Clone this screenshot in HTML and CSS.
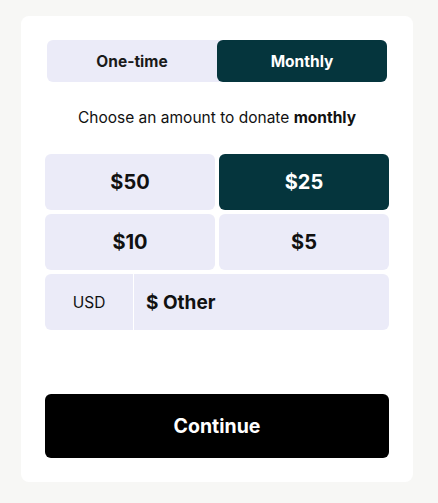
FILE: index.html
```html
<!DOCTYPE html>
<html>
<head>
<meta charset="utf-8">
<link rel="stylesheet" href="styles.css">
</head>
<body>
<div class="card">
  <div class="toggle">
    <button class="tab">One-time</button>
    <button class="tab active">Monthly</button>
  </div>
  <p class="prompt">Choose an amount to donate <b>monthly</b></p>
  <div class="amounts">
    <button class="amt">$50</button>
    <button class="amt selected">$25</button>
    <button class="amt">$10</button>
    <button class="amt">$5</button>
    <div class="other">
      <span class="currency">USD</span>
      <span class="other-input">$ Other</span>
    </div>
  </div>
  <button class="continue">Continue</button>
</div>
</body>
</html>
```
FILE: styles.css
```css
* { box-sizing: border-box; }
html, body { margin: 0; padding: 0; }
body {
  background: #f7f7f5;
  font-family: Inter, "Noto Sans", sans-serif;
  color: #111;
  padding: 16px 25px 21px 21px;
}
.card {
  background: #fff;
  border-radius: 8px;
  padding: 24px;
  width: 392px;
  height: 466px;
  display: flex;
  flex-direction: column;
}
.toggle {
  display: grid;
  grid-template-columns: 1fr 1fr;
  margin: 0 2px;
  height: 42px;
  background: #ebebf8;
  border-radius: 6px;
}
.tab {
  border: 0;
  background: transparent;
  font-family: inherit;
  font-size: 15.5px;
  font-weight: 700;
  color: #1a1a1a;
  border-radius: 6px;
  padding: 0;
}
.tab.active {
  background: #05353d;
  color: #fff;
}
.prompt {
  margin: 0;
  padding-top: 27px;
  height: 72px;
  text-align: center;
  font-size: 15.5px;
  line-height: 18px;
  color: #111;
}
.prompt b { font-weight: 700; }
.amounts {
  display: grid;
  grid-template-columns: 1fr 1fr;
  grid-auto-rows: 56px;
  gap: 4px;
}
.amt {
  border: 0;
  background: #ebebf8;
  border-radius: 6px;
  font-family: inherit;
  font-size: 20px;
  font-weight: 700;
  color: #111;
  padding: 0;
}
.amt.selected {
  background: #05353d;
  color: #fff;
}
.other {
  grid-column: 1 / 3;
  display: flex;
  background: #ebebf8;
  border-radius: 6px;
  overflow: hidden;
}
.currency {
  width: 89px;
  display: flex;
  align-items: center;
  justify-content: center;
  font-size: 15.5px;
  color: #111;
  border-right: 1px solid #fff;
}
.other-input {
  display: flex;
  align-items: center;
  padding-left: 12px;
  font-size: 19px;
  font-weight: 700;
  color: #111;
}
.continue {
  margin-top: auto;
  height: 64px;
  border: 0;
  border-radius: 6px;
  background: #000;
  color: #fff;
  font-family: inherit;
  font-size: 19.5px;
  font-weight: 700;
  padding: 0;
}
```
